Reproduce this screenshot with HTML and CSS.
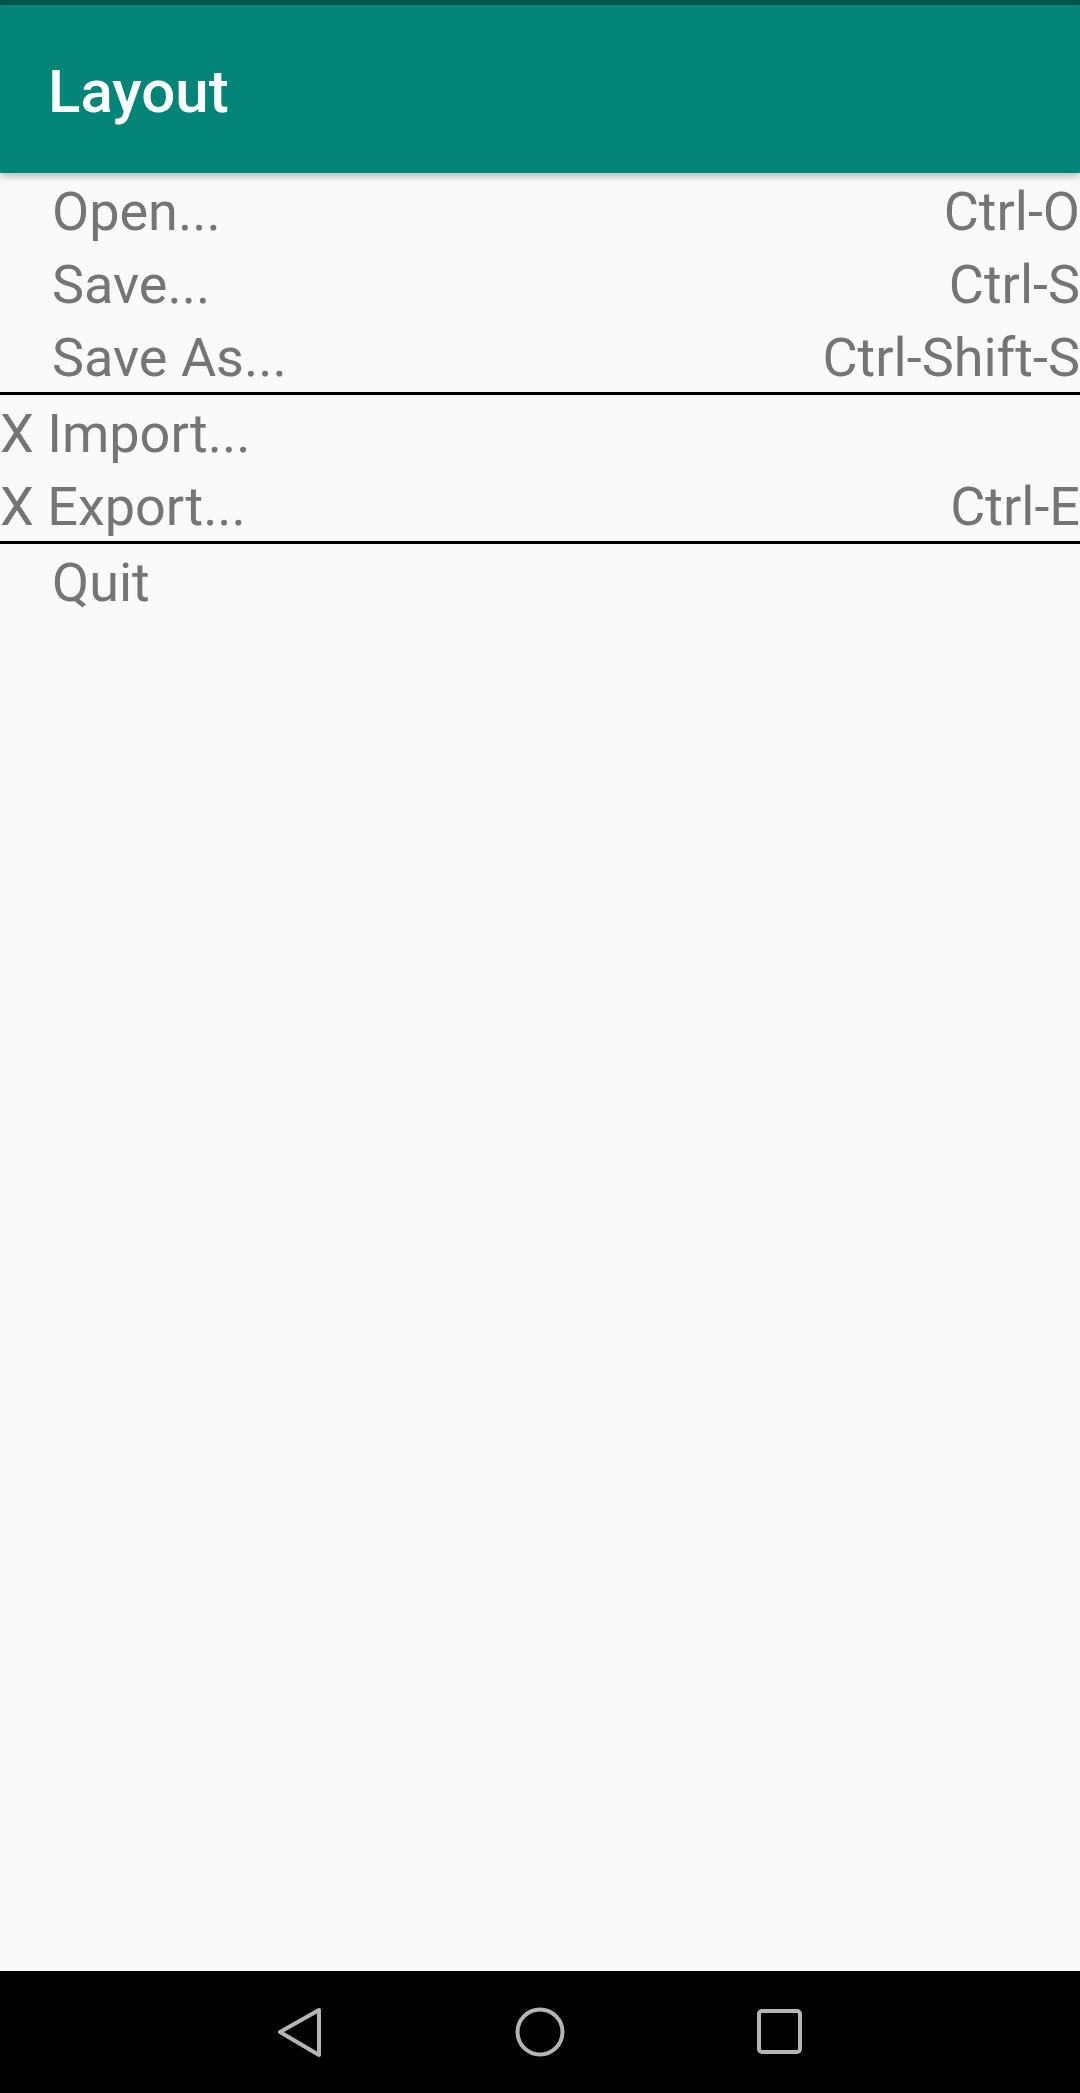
FILE: index.html
```html
<!DOCTYPE html>
<html lang="en">
<head>
<meta charset="utf-8">
<title>Layout</title>
<link rel="stylesheet" href="styles.css">
</head>
<body>
<div class="screen">
  <div class="status"></div>
  <header class="appbar"><h1 class="title">Layout</h1></header>
  <main class="menu">
    <div class="row"><span class="label indent">Open...</span><span class="key">Ctrl-O</span></div>
    <div class="row"><span class="label indent">Save...</span><span class="key">Ctrl-S</span></div>
    <div class="row"><span class="label indent">Save As...</span><span class="key">Ctrl-Shift-S</span></div>
    <div class="sep"></div>
    <div class="row"><span class="label">X Import...</span><span class="key"></span></div>
    <div class="row"><span class="label">X Export...</span><span class="key">Ctrl-E</span></div>
    <div class="sep"></div>
    <div class="row"><span class="label indent">Quit</span><span class="key"></span></div>
  </main>
  <nav class="navbar">
    <svg class="navicon" viewBox="0 0 60 60" width="60" height="60"><path d="M10 30 L49 8 L49 53 Z" fill="none" stroke="#b5b5b5" stroke-width="4" stroke-linejoin="round"/></svg>
    <svg class="navicon" viewBox="0 0 60 60" width="60" height="60"><circle cx="30" cy="30" r="22.5" fill="none" stroke="#b5b5b5" stroke-width="4"/></svg>
    <svg class="navicon" viewBox="0 0 60 60" width="60" height="60"><rect x="9" y="9" width="41" height="41" rx="3" fill="none" stroke="#b5b5b5" stroke-width="4"/></svg>
  </nav>
</div>
</body>
</html>
```
FILE: styles.css
```css
html, body {
  margin: 0;
  padding: 0;
}
body {
  background: #fafafa;
  font-family: Roboto, "Liberation Sans", sans-serif;
}
.screen {
  width: 1080px;
  height: 2093px;
  display: flex;
  flex-direction: column;
  overflow: hidden;
}
.status {
  height: 5px;
  background: #00574b;
  flex: none;
}
.appbar {
  flex: none;
  height: 168px;
  background: #028577;
  display: flex;
  align-items: center;
  padding-left: 48px;
  box-sizing: border-box;
  position: relative;
  z-index: 1;
  box-shadow: 0 3px 8px rgba(0, 0, 0, 0.28);
}
.title {
  margin: 0;
  color: #ffffff;
  font-size: 60px;
  font-weight: 500;
  line-height: 70px;
  padding-top: 5px;
}
.menu {
  flex: 1;
  display: flex;
  flex-direction: column;
}
.row {
  height: 73px;
  box-sizing: border-box;
  padding-top: 5px;
  display: flex;
  justify-content: space-between;
  font-size: 54px;
  line-height: 68px;
  color: #757575;
  white-space: nowrap;
}
.indent {
  padding-left: 52px;
}
.sep {
  height: 3px;
  background: #000;
  flex: none;
}
.navbar {
  flex: none;
  height: 122px;
  background: #000;
  display: flex;
  align-items: center;
  justify-content: center;
  gap: 180px;
}
.navicon {
  display: block;
}
```
